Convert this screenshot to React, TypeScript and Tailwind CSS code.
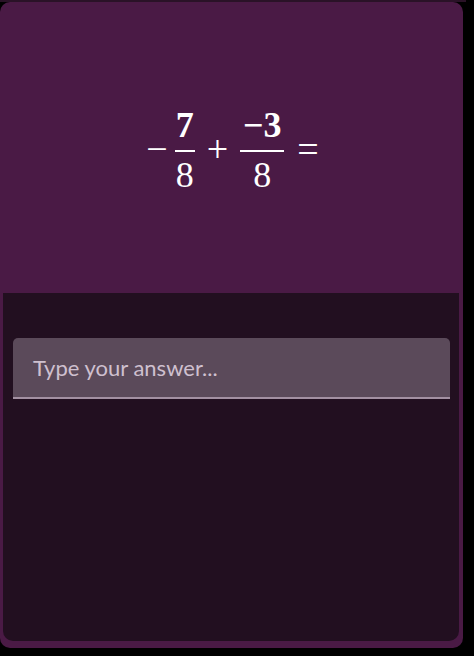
import React from 'react';

const Frac: React.FC<{ num: string; den: string; w: string }> = ({ num, den, w }) => (
  <span className="inline-flex flex-col items-center">
    <span className="leading-none pb-[7px] font-bold">{num}</span>
    <span className={`h-[2px] bg-white ${w}`} />
    <span className="leading-none pt-[5px]">{den}</span>
  </span>
);

export default function App() {
  return (
    <div className="w-[474px] h-[656px] bg-black overflow-hidden">
      <div className="h-[2px] w-[466px] bg-[#2a1227]" />
      <div className="w-[463px] h-[646px] bg-[#4a1a45] rounded-[10px] flex flex-col">
        <div className="h-[291px] flex items-center justify-center text-white text-[36px]">
          <div className="flex items-center mt-[4px] ml-[2px]" style={{ fontFamily: '"Liberation Serif", serif' }}>
            <span className="text-[38px] mr-[7px]">−</span>
            <Frac num="7" den="8" w="w-[20px]" />
            <span className="text-[38px] mx-[12px]">+</span>
            <Frac num="−3" den="8" w="w-[44px]" />
            <span className="text-[38px] ml-[13px]">=</span>
          </div>
        </div>
        <div className="flex-1 ml-[3px] mr-[4px] mb-[7px] bg-[#220f20] rounded-b-[10px] pt-[45px] px-[10px]">
          <div className="h-[61px] w-[437px] bg-[#5b4a5a] rounded-t-[5px] border-b-2 border-[#a390a2] flex items-center px-[20px]">
            <span className="text-[22px] text-[#cfc0cf]" style={{ fontFamily: 'Lato, "Open Sans", sans-serif' }}>Type your answer...</span>
          </div>
        </div>
      </div>
    </div>
  );
}
